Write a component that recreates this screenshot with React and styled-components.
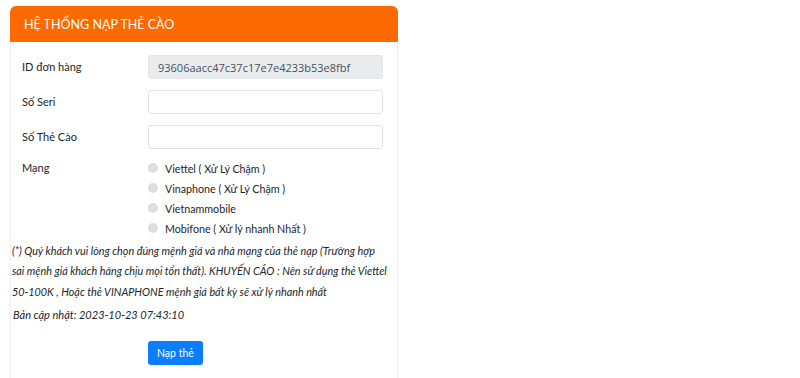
import React from 'react';
import styled, { createGlobalStyle } from 'styled-components';

const GlobalStyle = createGlobalStyle`
  html, body {
    margin: 0;
    padding: 0;
    background: #ffffff;
  }
  body {
    font-family: Lato, "Noto Sans", "Liberation Sans", sans-serif;
    color: #212529;
  }
`;

const networks = [
  'Viettel ( Xử Lý Chậm )',
  'Vinaphone ( Xử Lý Chậm )',
  'Vietnammobile',
  'Mobifone ( Xử lý nhanh Nhất )',
];

function App() {
  return (
    <>
      <GlobalStyle />
      <Page>
        <Card>
          <Header>HỆ THỐNG NẠP THẺ CÀO</Header>
          <Body>
            <Row>
              <Label>ID đơn hàng</Label>
              <Field readOnly value='93606aacc47c37c17e7e4233b53e8fbf' $readonly />
            </Row>
            <Row>
              <Label>Số Seri</Label>
              <Field />
            </Row>
            <Row>
              <Label>Số Thẻ Cào</Label>
              <Field />
            </Row>
            <RadioRow>
              <Label>Mạng</Label>
              <RadioList>
                {networks.map((name) => (
                  <RadioItem key={name}>
                    <Dot />
                    <span>{name}</span>
                  </RadioItem>
                ))}
              </RadioList>
            </RadioRow>
            <Note>
              (*) Quý khách vui lòng chọn đúng mệnh giá và nhà mạng của thẻ nạp (Trường hợp
              <br />
              sai mệnh giá khách hàng chịu mọi tổn thất). KHUYẾN CÁO : Nên sử dụng thẻ Viettel
              <br />
              50-100K , Hoặc thẻ VINAPHONE mệnh giá bất kỳ sẽ xử lý nhanh nhất
            </Note>
            <Updated>Bản cập nhật: 2023-10-23 07:43:10</Updated>
            <Actions>
              <SubmitButton>Nạp thẻ</SubmitButton>
            </Actions>
          </Body>
        </Card>
      </Page>
    </>
  );
}

const Page = styled.div`
  padding: 6px 0 0 10px;
`;

const Card = styled.div`
  width: 386px;
  border: 1px solid #f1f1f1;
  border-top: none;
  border-radius: 6px 6px 0 0;
  box-shadow: 0 0 3px rgba(0, 0, 0, 0.04);
`;

const Header = styled.div`
  height: 36px;
  display: flex;
  align-items: center;
  padding: 0 14px;
  background: #ff6a00;
  color: #ffffff;
  font-size: 12.5px;
  border-radius: 6px 6px 0 0;
  margin: 0 -1px;
`;

const Body = styled.div`
  padding: 13px 12px 24px 11px;
`;

const Row = styled.div`
  display: grid;
  grid-template-columns: 126px 235px;
  align-items: center;
  margin-bottom: 11px;
`;

const RadioRow = styled(Row)`
  align-items: start;
  margin: -2px 0 0;
`;

const Label = styled.label`
  font-size: 11px;
  line-height: 20px;
  color: #212529;
`;

const Field = styled.input`
  box-sizing: border-box;
  height: 24px;
  width: 235px;
  padding: 0 9px;
  border: 1px solid ${(p) => (p.$readonly ? '#e3e6e9' : '#dfe3e7')};
  border-radius: 3px;
  background: ${(p) => (p.$readonly ? '#e9ecef' : '#ffffff')};
  font-family: "Open Sans", sans-serif;
  font-size: 11px;
  color: #495057;
  outline: none;
`;

const RadioList = styled.div`
  display: flex;
  flex-direction: column;
`;

const RadioItem = styled.div`
  display: flex;
  align-items: center;
  gap: 7px;
  height: 20px;
  font-size: 10.7px;
  color: #212529;
`;

const Dot = styled.span`
  width: 10px;
  height: 10px;
  border-radius: 50%;
  background: #dedede;
  flex-shrink: 0;
`;

const Note = styled.p`
  margin: 3px -12px 0 -10px;
  font-style: italic;
  font-size: 10.8px;
  line-height: 20.3px;
  white-space: nowrap;
  color: #212529;
`;

const Updated = styled.p`
  margin: 3px 0 0 -9px;
  font-style: italic;
  font-size: 11px;
  line-height: 20px;
  color: #212529;
`;

const Actions = styled.div`
  padding: 16px 0 0 126px;
`;

const SubmitButton = styled.button`
  height: 24px;
  padding: 0 9px;
  border: none;
  border-radius: 3px;
  background: #0d7dff;
  color: #ffffff;
  font-family: inherit;
  font-size: 10.5px;
`;

export default App;
